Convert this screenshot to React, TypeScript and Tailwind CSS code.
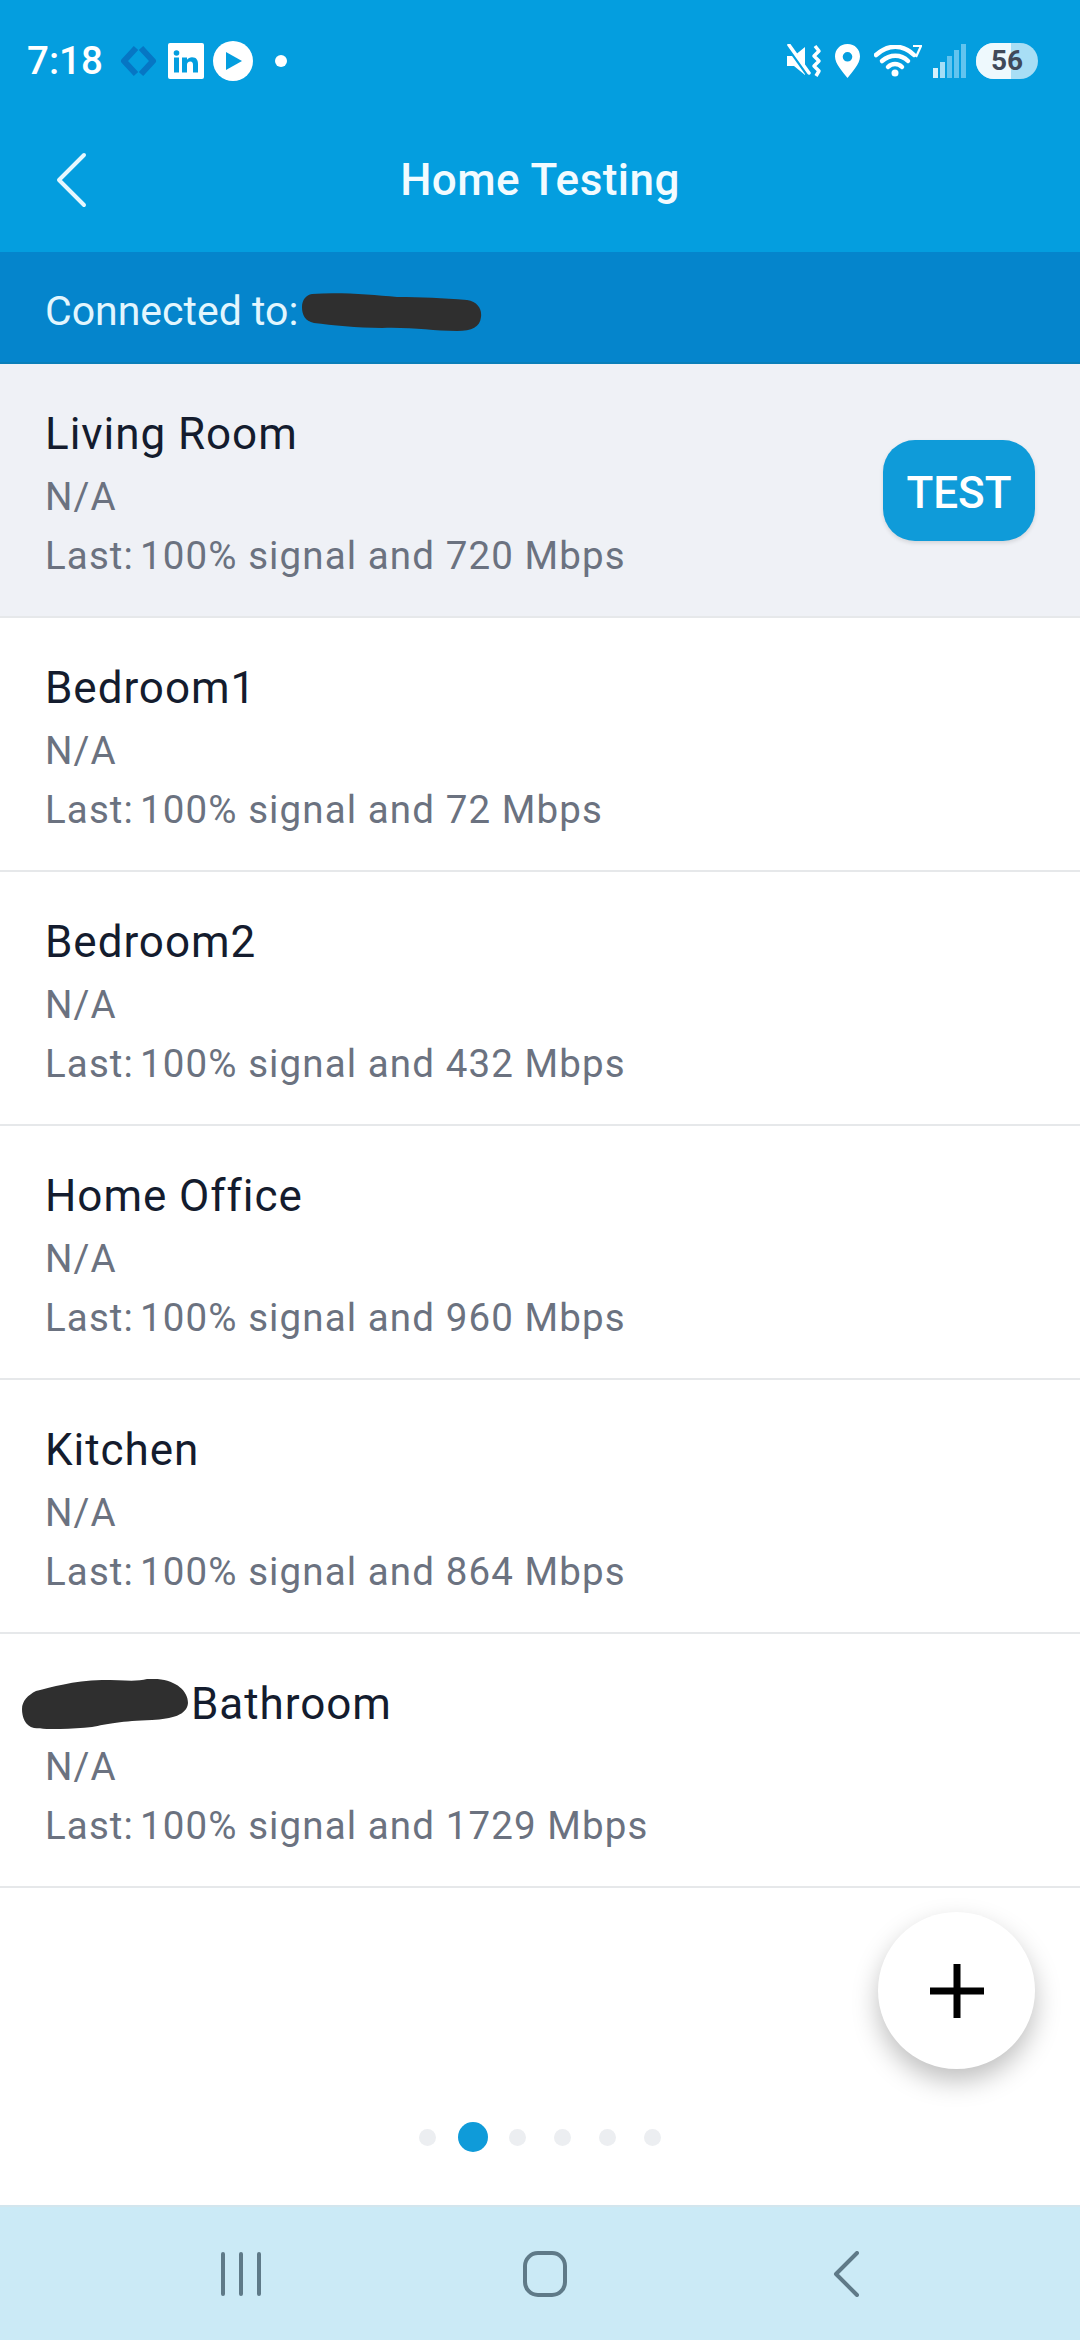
import React from "react";

const rows = [
  { name: "Living Room", last: "720", active: true },
  { name: "Bedroom1", last: "72" },
  { name: "Bedroom2", last: "432" },
  { name: "Home Office", last: "960" },
  { name: "Kitchen", last: "864" },
  { name: "Bathroom", last: "1729", redacted: true },
];

function Row({ name, last, active, redacted }: { name: string; last: string; active?: boolean; redacted?: boolean }) {
  return (
    <div className={`h-[254px] shrink-0 flex items-center justify-between pl-[45px] pr-[45px] border-b-2 border-[#e6e8ea] ${active ? "bg-[#eff1f6]" : "bg-white"}`}>
      <div className="flex flex-col pt-[7px]">
        <div className="flex items-center h-[64px] text-[44px] leading-[62px] text-[#141c2e] tracking-[0.95px] pb-[2px]">
          {redacted && (
            <svg width="166" height="50" viewBox="0 0 166 50" className="-ml-[23px] mr-[3px] shrink-0">
              <path d="M14 12 C30 8 50 2 80 1 C100 1 115 3 125 0 C150 -2 166 10 166 24 C165 36 150 40 130 41 C100 42 85 45 70 48 C50 50 25 51 12 49 C3 47 0 38 0 30 C0 22 6 16 14 12 Z" fill="#2f2f2f" />
            </svg>
          )}
          <span>{name}</span>
        </div>
        <div className="h-[60px] text-[38.5px] leading-[60px] text-[#6b7280] tracking-[1.1px]">N/A</div>
        <div className="h-[58px] text-[38.5px] leading-[58px] text-[#6b7280] tracking-[1.1px] whitespace-pre">
          {`Last:`}
          <span className="ml-[6px]">100% signal and {last} Mbps</span>
        </div>
      </div>
      {active && (
        <div className="w-[152px] h-[101px] rounded-[32px] bg-[#0f9bd9] flex items-center justify-center pt-[5px] text-white text-[44px] font-medium shadow-[0_2px_4px_rgba(0,0,0,0.12)]">
          TEST
        </div>
      )}
    </div>
  );
}

export default function App() {
  return (
    <div
      className="relative w-[1080px] h-[2340px] flex flex-col bg-white overflow-hidden"
      style={{ fontFamily: "Roboto, sans-serif" }}
    >
      <div className="h-[252px] shrink-0 bg-[#049edf] flex flex-col">
        {/* status bar */}
        <div className="h-[122px] shrink-0 flex items-center justify-between pl-[27px] pr-[42px] text-white">
          <div className="flex items-center">
            <span className="text-[38.5px] font-medium leading-none mr-[17px]">7:18</span>
            <svg width="37" height="34" viewBox="0 0 37 34" className="mr-[11px]">
              <path d="M16 4 L4 17 L16 30 M21 4 L33 17 L21 30" fill="none" stroke="#0676c4" strokeWidth="6" strokeLinejoin="round" />
            </svg>
            <svg width="36" height="36" viewBox="0 0 36 36" className="mr-[9px]">
              <rect width="36" height="36" rx="2" fill="#ffffff" />
              <circle cx="8.5" cy="10" r="2.8" fill="#049edf" />
              <rect x="6" y="14.5" width="5" height="15" fill="#049edf" />
              <path d="M14 14.5 H19 V16.8 C20 15 22 14.2 24 14.2 C28.500 14.200 30 17 30 21 V29.500 H25 V22 C25 20 24.300 18.500 22.300 18.500 C20.200 18.500 19 20 19 22 V29.500 H14 Z" fill="#049edf" />
            </svg>
            <svg width="40" height="40" viewBox="0 0 40 40" className="mr-[22px]">
              <circle cx="20" cy="20" r="20" fill="#ffffff" />
              <path d="M13 11 L29 20 L13 29 Z" fill="#049edf" />
            </svg>
            <span className="w-[12px] h-[12px] rounded-full bg-white" />
          </div>
          <div className="flex items-center">
            <svg width="36" height="34" viewBox="0 0 36 34" className="mr-[13px]">
              <path d="M1 12 H8 L19 3 V31 L8 22 H1 Z" fill="#ffffff" />
              <path d="M2 2 L22 30" stroke="#049edf" strokeWidth="5" />
              <path d="M3 1 L23 29" stroke="#ffffff" strokeWidth="3.500" strokeLinecap="round" />
              <path d="M29 2 L33 7 L28 12 L33 17 L28 22 L33 27 L30 32" fill="none" stroke="#ffffff" strokeWidth="3.500" strokeLinejoin="round" />
            </svg>
            <svg width="25" height="34" viewBox="0 0 25 34" className="mr-[14px]">
              <path fillRule="evenodd" d="M12.500 0 C20 0 25 5.500 25 12.500 C25 20 17 28 12.500 34 C8 28 0 20 0 12.500 C0 5.500 5 0 12.500 0 Z M12.500 8 A4.800 4.800 0 1 0 12.500 17.600 A4.800 4.800 0 1 0 12.500 8 Z" fill="#ffffff" />
            </svg>
            <svg width="48" height="32" viewBox="0 0 48 32" className="mr-[11px]">
              <path d="M2 10 C14 -1 29 -1 40 10" fill="none" stroke="#ffffff" strokeWidth="4.500" strokeLinecap="round" />
              <path d="M8 16 C16 9 27 9 34 16" fill="none" stroke="#ffffff" strokeWidth="4.500" strokeLinecap="round" />
              <path d="M14 22 C18 18 24 18 28 22" fill="none" stroke="#ffffff" strokeWidth="4.500" strokeLinecap="round" />
              <circle cx="21" cy="28" r="3.500" fill="#ffffff" />
              <path d="M39 1 H47 L42 12" fill="none" stroke="#ffffff" strokeWidth="2.200" />
            </svg>
            <svg width="33" height="34" viewBox="0 0 33 34" className="mr-[10px]">
              <rect x="0" y="24" width="5" height="10" fill="#d6f0fb" />
              <rect x="7" y="18" width="5" height="16" fill="#a5def6" />
              <rect x="14" y="12" width="5" height="22" fill="#62c4ef" />
              <rect x="21" y="6" width="5" height="28" fill="#62c4ef" />
              <rect x="28" y="0" width="5" height="34" fill="#62c4ef" />
            </svg>
            <div className="relative w-[62px] h-[36px] rounded-full overflow-hidden bg-[#a8def5] flex items-center justify-center">
              <div className="absolute left-0 top-0 bottom-0 w-[35px] bg-[#eef9fd]" />
              <span className="relative text-[#3f4a5a] text-[28px] font-bold leading-none">56</span>
            </div>
          </div>
        </div>
        {/* title bar */}
        <div className="relative h-[116px] shrink-0 flex items-center justify-center">
          <svg width="34" height="56" viewBox="0 0 34 56" className="absolute left-[55px] top-[30px]">
            <path d="M29 3 L4 28 L29 53" fill="none" stroke="#e6f7fe" strokeWidth="4" strokeLinecap="round" strokeLinejoin="round" />
          </svg>
          <span className="text-[44px] font-medium text-[#f2fbff] tracking-[0.45px] -mt-[1px]">Home Testing</span>
        </div>
      </div>

      <div className="h-[112px] shrink-0 bg-[#0585cc] flex items-center pl-[45px] pt-[9px] text-[41px] text-[#e2f6fe] border-b-2 border-[#0a7fb9]">
        <span>Connected to:</span>
        <svg width="180" height="38" viewBox="0 0 180 38" className="ml-[4px] shrink-0">
          <path d="M10 1 C40 -1 70 2 95 4 C120 4 140 5 165 7 C176 9 180 16 179 24 C178 34 170 38 155 38 C130 38 110 34 80 35 C55 35 30 32 12 30 C3 28 0 22 0 14 C0 7 4 2 10 1 Z" fill="#2f2f2f" />
        </svg>
      </div>

      <div className="flex flex-col">
        {rows.map((r) => (
          <Row key={r.name} {...r} />
        ))}
      </div>

      <div className="flex-1 bg-white flex items-end justify-center pb-[53px]">
        <div className="flex items-center">
          {[0, 1, 2, 3, 4, 5].map((i) => (
            <div key={i} className="w-[45px] flex items-center justify-center">
              {i === 1 ? (
                <span className="w-[30px] h-[30px] rounded-full bg-[#0f9bd9]" />
              ) : (
                <span className="w-[17px] h-[17px] rounded-full bg-[#eceef1]" />
              )}
            </div>
          ))}
        </div>
      </div>

      <div className="h-[135px] shrink-0 bg-[#cbeaf6] border-t-2 border-[#d3e6ee] flex items-center justify-between pl-[221px] pr-[221px]">
        <svg width="40" height="44" viewBox="0 0 40 44">
          <path d="M2 2 V42 M20 2 V42 M38 2 V42" stroke="#5f7a88" strokeWidth="4" strokeLinecap="round" />
        </svg>
        <svg width="44" height="46" viewBox="0 0 44 46" className="-ml-[4px]">
          <rect x="2" y="2" width="40" height="42" rx="13" fill="none" stroke="#5f7a88" strokeWidth="4" />
        </svg>
        <svg width="26" height="46" viewBox="0 0 26 46">
          <path d="M24 2 L3 23 L24 44" fill="none" stroke="#5f7a88" strokeWidth="4" strokeLinecap="round" strokeLinejoin="round" />
        </svg>
      </div>

      <div className="absolute left-[878px] top-[1912px] w-[157px] h-[157px] rounded-full bg-white flex items-center justify-center shadow-[0_12px_26px_rgba(0,0,0,0.25)]">
        <svg width="56" height="56" viewBox="0 0 56 56">
          <path d="M28 1 V55 M1 28 H55" stroke="#000000" strokeWidth="7" />
        </svg>
      </div>
    </div>
  );
}
